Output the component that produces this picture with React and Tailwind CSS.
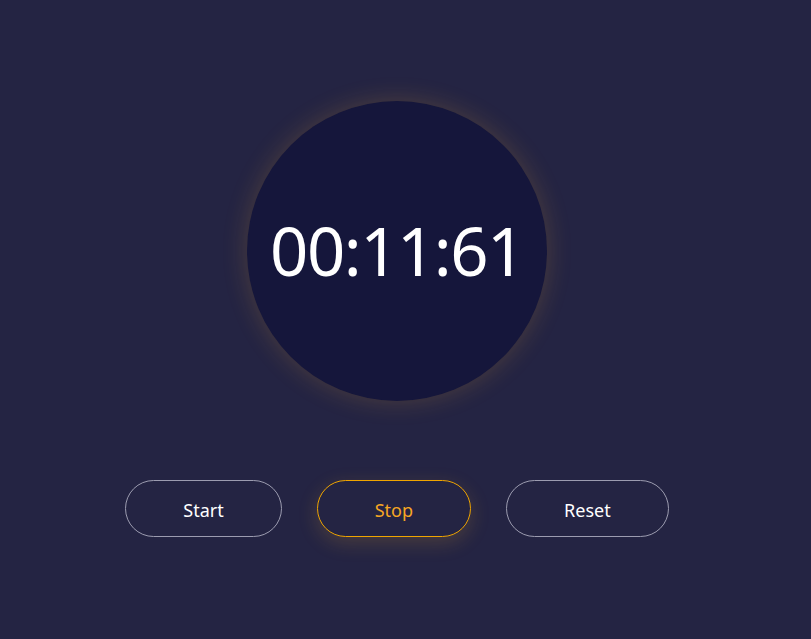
export default function App() {
  const buttons = [
    { label: 'Start', active: false },
    { label: 'Stop', active: true },
    { label: 'Reset', active: false },
  ];

  return (
    <div
      className="min-h-screen w-full bg-[#242443] flex flex-col items-center pr-[17px]"
      style={{ fontFamily: '"Noto Sans", "Open Sans", sans-serif' }}
    >
      <div className="mt-[101px] w-[300px] h-[300px] rounded-full bg-[#15163b] flex items-center justify-center shadow-[0_0_26px_rgba(245,170,40,0.2)]">
        <span className="text-white text-[67px] leading-none tracking-[-1.5px] pb-[2px]">00:11:61</span>
      </div>

      <div className="mt-[79px] flex items-center gap-[35px]">
        {buttons.map((b) => (
          <button
            key={b.label}
            className={
              b.active
                ? 'h-[57px] px-[57px] pt-[3px] rounded-full border border-[#f0a500] text-[#f6a623] text-[18px] bg-transparent shadow-[0_6px_20px_rgba(245,170,40,0.18)]'
                : 'h-[57px] px-[57px] pt-[3px] rounded-full border border-[#9c9cb0] text-white text-[18px] bg-transparent'
            }
          >
            {b.label}
          </button>
        ))}
      </div>
    </div>
  );
}
